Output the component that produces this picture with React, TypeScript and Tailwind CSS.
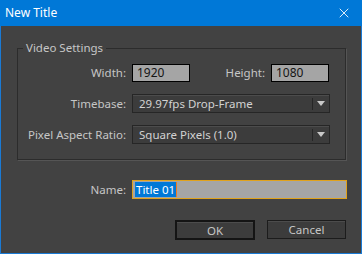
import React from "react";
import { X } from "lucide-react";

const font = { fontFamily: '"Noto Sans", "Liberation Sans", sans-serif' };

function Dropdown({ value }: { value: string }) {
  return (
    <div className="flex h-[19px] w-[198px] items-center border border-[#262626] bg-[#3c3c3c] shadow-[inset_0_1px_0_#4c4c4c]">
      <span className="flex-1 pl-[6px] leading-none text-[#d2d2d2]">{value}</span>
      <span className="h-[12px] w-px bg-[#262626]" />
      <span className="flex w-[16px] justify-center">
        <svg width="8" height="5" viewBox="0 0 8 5">
          <path d="M0 0h8L4 5z" fill="#c8c8c8" />
        </svg>
      </span>
    </div>
  );
}

export default function App() {
  return (
    <div
      className="flex h-[254px] w-[362px] flex-col border border-t-0 border-[#1a7ad4] bg-[#424242] text-[11.5px] text-[#c6c6c6]"
      style={font}
    >
      {/* title bar */}
      <div className="-mx-px flex h-[26px] items-center justify-between bg-[#0078d7] pl-[5px] pr-[10px] text-white">
        <span className="text-[12px]">New Title</span>
        <X size={16} strokeWidth={1.3} />
      </div>

      {/* group box */}
      <fieldset className="mx-[16px] mt-[14px] border border-[#2c2c2c] pb-[15px] pr-[15px] shadow-[1px_1px_0_#555]">
        <legend className="ml-[5px] px-[3px] leading-4">Video Settings</legend>
        <div className="mt-[8px] flex flex-col gap-[12px]">
          <div className="flex items-center">
            <span className="w-[108px] text-right">Width:</span>
            <input
              className="ml-[6px] h-[18px] w-[58px] border border-black bg-[#a5a5a5] px-[4px] text-[12px] text-[#151515] outline-none"
              defaultValue="1920"
            />
            <span className="w-[75px] text-right">Height:</span>
            <input
              className="ml-[6px] h-[18px] w-[58px] border border-black bg-[#a5a5a5] px-[4px] text-[12px] text-[#151515] outline-none"
              defaultValue="1080"
            />
          </div>
          <div className="flex items-center">
            <span className="w-[108px] text-right">Timebase:</span>
            <div className="ml-[6px]">
              <Dropdown value="29.97fps Drop-Frame" />
            </div>
          </div>
          <div className="flex items-center">
            <span className="w-[108px] text-right">Pixel Aspect Ratio:</span>
            <div className="ml-[6px]">
              <Dropdown value="Square Pixels (1.0)" />
            </div>
          </div>
        </div>
      </fieldset>

      {/* name */}
      <div className="mt-[20px] flex items-center pl-[16px]">
        <span className="w-[109px] text-right">Name:</span>
        <div className="ml-[6px] flex h-[19px] w-[215px] items-center border border-[#e0a21c] bg-[#a5a5a5] pl-[2px]">
          <span className="bg-[#0078d7] px-px leading-[15px] text-white">Title 01</span>
          <span className="h-[15px] w-px bg-[#f07a20]" />
        </div>
      </div>

      {/* buttons */}
      <div className="mt-[21px] flex justify-end gap-[12px] pr-[15px]">
        <button className="h-[20px] w-[80px] border-2 border-[#141414] bg-[#3c3c3c] text-[#c6c6c6] shadow-[inset_0_1px_0_#4c4c4c]">
          OK
        </button>
        <button className="h-[19px] w-[79px] border border-[#1c1c1c] bg-[#3c3c3c] text-[#c6c6c6] shadow-[inset_0_1px_0_#4c4c4c]">
          Cancel
        </button>
      </div>
    </div>
  );
}
